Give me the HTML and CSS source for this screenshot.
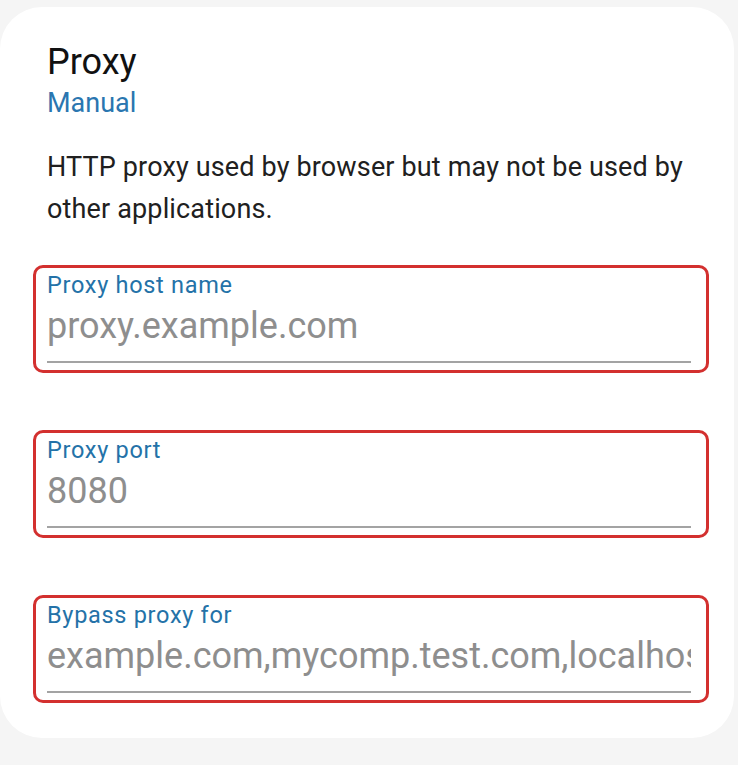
FILE: index.html
```html
<!DOCTYPE html>
<html lang="en">
<head>
<meta charset="utf-8">
<title>Proxy</title>
<link rel="stylesheet" href="styles.css">
</head>
<body>
<div class="card">
  <div class="title">Proxy</div>
  <div class="mode">Manual</div>
  <p class="desc">HTTP proxy used by browser but may not be used by other applications.</p>

  <div class="field">
    <label class="label" for="host">Proxy host name</label>
    <div class="line"><input id="host" class="input" type="text" placeholder="proxy.example.com"></div>
  </div>

  <div class="field">
    <label class="label" for="port">Proxy port</label>
    <div class="line"><input id="port" class="input" type="text" placeholder="8080"></div>
  </div>

  <div class="field">
    <label class="label" for="bypass">Bypass proxy for</label>
    <div class="line"><input id="bypass" class="input" type="text" placeholder="example.com,mycomp.test.com,localhost"></div>
  </div>
</div>
</body>
</html>
```

FILE: styles.css
```css
html, body {
  margin: 0;
  padding: 0;
}
body {
  background: #f5f5f5;
  font-family: Roboto, "Noto Sans", "Liberation Sans", sans-serif;
  width: 738px;
  height: 765px;
  overflow: hidden;
}
.card {
  margin-top: 7px;
  width: 734px;
  box-sizing: border-box;
  background: #ffffff;
  border-radius: 42px;
  padding: 33px 25px 35px 33px;
}
.title {
  padding-left: 14px;
  font-size: 36px;
  line-height: 44px;
  color: #111111;
}
.mode {
  padding-left: 14px;
  margin-top: 3px;
  font-size: 27px;
  line-height: 32px;
  color: #2a76b0;
}
.desc {
  margin: 27px 0 0;
  padding-left: 14px;
  font-size: 27px;
  line-height: 42px;
  letter-spacing: 0.15px;
  color: #202020;
}
.field {
  margin-top: 57px;
  border: 3px solid #d3302f;
  border-radius: 10px;
  padding: 3px 15px 7px 11px;
}
.desc + .field {
  margin-top: 35px;
}
.label {
  display: block;
  font-size: 23.5px;
  line-height: 28px;
  letter-spacing: 0.7px;
  color: #2472a8;
}
.line {
  margin-top: 7px;
  padding-bottom: 15px;
  border-bottom: 2px solid #a3a3a3;
}
.input {
  display: block;
  width: 100%;
  box-sizing: border-box;
  border: 0;
  outline: none;
  padding: 0;
  margin: 0;
  background: transparent;
  font-family: inherit;
  font-size: 36px;
  line-height: 40px;
  height: 40px;
  color: #555555;
}
.input::placeholder {
  color: #8e8e8e;
  opacity: 1;
}
```
